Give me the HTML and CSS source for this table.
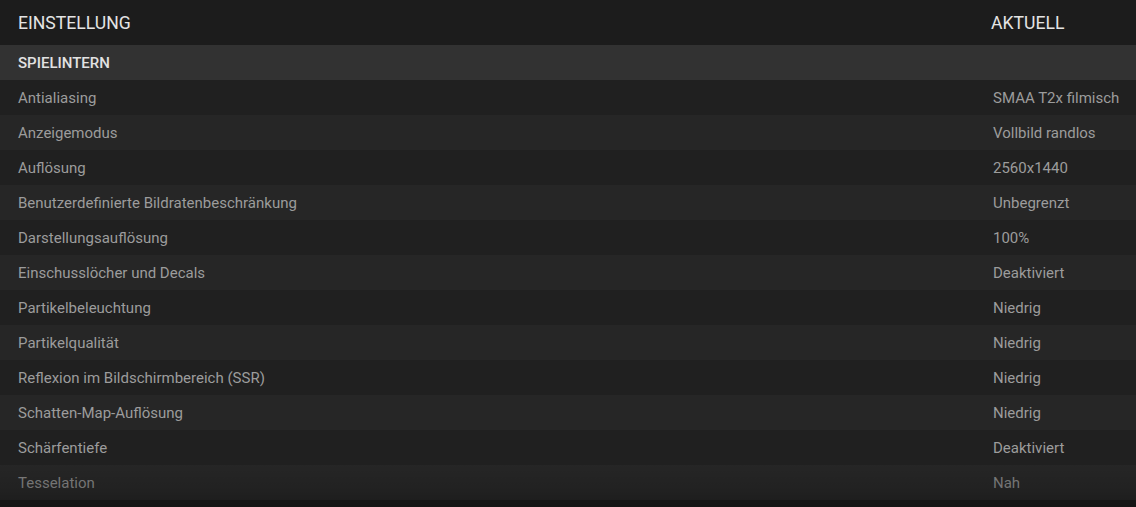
FILE: index.html
```html
<!DOCTYPE html>
<html lang="de">
<head>
<meta charset="utf-8">
<link rel="stylesheet" href="styles.css">
</head>
<body>
<div class="table">
  <div class="head">
    <span class="name">EINSTELLUNG</span>
    <span class="val">AKTUELL</span>
  </div>
  <div class="group">SPIELINTERN</div>
  <div class="row dark"><span class="name">Antialiasing</span><span class="val">SMAA T2x filmisch</span></div>
  <div class="row light"><span class="name">Anzeigemodus</span><span class="val">Vollbild randlos</span></div>
  <div class="row dark"><span class="name">Auflösung</span><span class="val">2560x1440</span></div>
  <div class="row light"><span class="name">Benutzerdefinierte Bildratenbeschränkung</span><span class="val">Unbegrenzt</span></div>
  <div class="row dark"><span class="name">Darstellungsauflösung</span><span class="val">100%</span></div>
  <div class="row light"><span class="name">Einschusslöcher und Decals</span><span class="val">Deaktiviert</span></div>
  <div class="row dark"><span class="name">Partikelbeleuchtung</span><span class="val">Niedrig</span></div>
  <div class="row light"><span class="name">Partikelqualität</span><span class="val">Niedrig</span></div>
  <div class="row dark"><span class="name">Reflexion im Bildschirmbereich (SSR)</span><span class="val">Niedrig</span></div>
  <div class="row light"><span class="name">Schatten-Map-Auflösung</span><span class="val">Niedrig</span></div>
  <div class="row dark"><span class="name">Schärfentiefe</span><span class="val">Deaktiviert</span></div>
  <div class="row light faded"><span class="name">Tesselation</span><span class="val">Nah</span></div>
</div>
</body>
</html>
```
FILE: styles.css
```css
html, body {
  margin: 0;
  padding: 0;
  background: #1a1a1a;
}
body {
  font-family: Roboto, "Liberation Sans", sans-serif;
  width: 1136px;
  height: 507px;
  overflow: hidden;
}
.table {
  position: relative;
  display: flex;
  flex-direction: column;
  height: 507px;
  overflow: hidden;
  background: linear-gradient(to bottom, #1e1e1e, #1b1b1b);
}
.table::after {
  content: "";
  position: absolute;
  left: 0;
  right: 0;
  bottom: 0;
  height: 45px;
  background: linear-gradient(to bottom, rgba(0,0,0,0) 0%, rgba(0,0,0,0.12) 60%, rgba(0,0,0,0.22) 85%, rgba(0,0,0,0.25) 100%);
  pointer-events: none;
}
.head, .group, .row {
  display: grid;
  grid-template-columns: 975px 1fr;
  align-items: center;
  padding-left: 18px;
  flex: none;
}
.head {
  height: 45px;
  background: #1c1c1c;
  color: #e4e4e4;
  font-size: 17.6px;
}
.head .val { margin-left: -2px; }
.group {
  height: 35px;
  background: #323232;
  color: #e2e2e2;
  font-size: 15px;
  font-weight: 500;
  display: flex;
}
.row {
  height: 35px;
  color: #9c9c9c;
  font-size: 15px;
}
.row.dark { background: #202020; }
.row.light { background: #262626; }
.row.faded { color: #808080; }
```
